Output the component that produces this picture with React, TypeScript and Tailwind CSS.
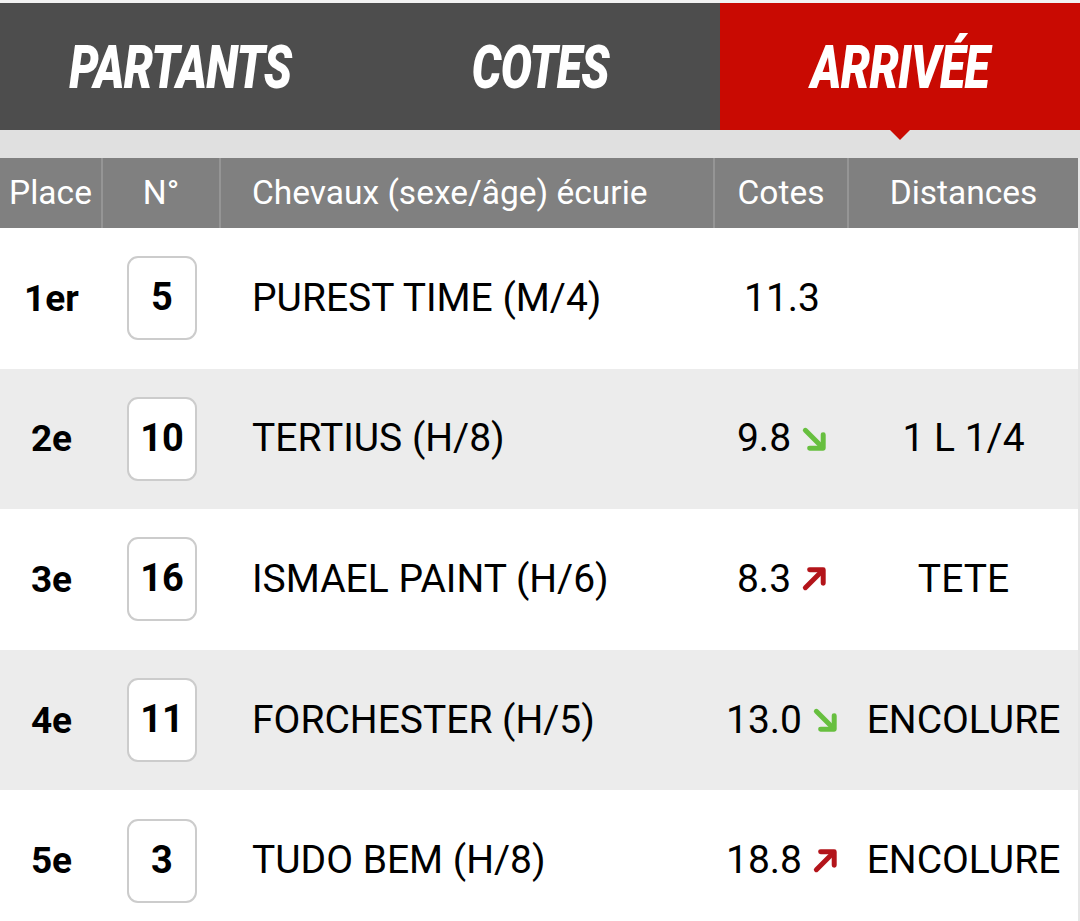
const rows = [
  { place: "1er", num: "5", name: "PUREST TIME (M/4)", cote: "11.3", trend: null, dist: "" },
  { place: "2e", num: "10", name: "TERTIUS (H/8)", cote: "9.8", trend: "down", dist: "1 L 1/4" },
  { place: "3e", num: "16", name: "ISMAEL PAINT (H/6)", cote: "8.3", trend: "up", dist: "TETE" },
  { place: "4e", num: "11", name: "FORCHESTER (H/5)", cote: "13.0", trend: "down", dist: "ENCOLURE" },
  { place: "5e", num: "3", name: "TUDO BEM (H/8)", cote: "18.8", trend: "up", dist: "ENCOLURE" },
];

function Trend({ dir }: { dir: string }) {
  if (dir === "down") {
    return (
      <svg className="w-[26px] h-[26px] text-[#67bf3f]" viewBox="0 0 24 24" fill="none" stroke="currentColor" strokeWidth="4.6" strokeLinecap="round" strokeLinejoin="round">
        <path d="M4 4 L19 19" />
        <path d="M20.5 8 V20.5 H8" />
      </svg>
    );
  }
  return (
    <svg className="w-[26px] h-[26px] text-[#b3141a]" viewBox="0 0 24 24" fill="none" stroke="currentColor" strokeWidth="4.6" strokeLinecap="round" strokeLinejoin="round">
      <path d="M4 20 L19 5" />
      <path d="M8 3.5 H20.5 V16" />
    </svg>
  );
}

const tabs = [
  { label: "PARTANTS", active: false },
  { label: "COTES", active: false },
  { label: "ARRIVÉE", active: true },
];

export default function App() {
  return (
    <div className="w-[1080px] h-[921px] overflow-hidden bg-white font-['Roboto',sans-serif]">
      {/* Tabs */}
      <div className="pt-[3px] bg-[#f2f2f2]">
        <div className="grid grid-cols-3 h-[127px] bg-[#4d4d4d]">
          {tabs.map((t) => (
            <div
              key={t.label}
              className={`relative flex items-center justify-center ${t.active ? "bg-[#c90a02]" : ""}`}
            >
              <span className="inline-block text-white text-[60px] font-black italic leading-none tracking-[-1px] scale-x-[0.775] pt-[2px]">
                {t.label}
              </span>
              {t.active && (
                <div className="absolute left-1/2 -translate-x-1/2 top-full w-0 h-0 border-l-[10px] border-r-[10px] border-t-[10px] border-l-transparent border-r-transparent border-t-[#c90a02] z-10" />
              )}
            </div>
          ))}
        </div>
      </div>
      <div className="h-[28px] bg-[#e0e0e0]" />

      {/* Table */}
      <div className="pr-[2px] bg-[#e6e6e6]">
        <div className="grid grid-cols-[103px_118px_494px_134px_1fr] h-[70px] bg-[#808080] text-white text-[33.5px] leading-none">
          <div className="flex items-center justify-center border-r-2 border-[#959595]">Place</div>
          <div className="flex items-center justify-center border-r-2 border-[#959595]">N°</div>
          <div className="flex items-center pl-[31px] border-r-2 border-[#959595]">Chevaux (sexe/âge) écurie</div>
          <div className="flex items-center justify-center border-r-2 border-[#959595]">Cotes</div>
          <div className="flex items-center justify-center">Distances</div>
        </div>

        {rows.map((r, i) => (
          <div
            key={r.place}
            className={`grid grid-cols-[103px_118px_494px_134px_1fr] h-[140.6px] items-center text-black text-[39px] leading-none ${i % 2 === 1 ? "bg-[#ececec]" : "bg-white"}`}
          >
            <div className="flex justify-center font-bold text-[37px]">{r.place}</div>
            <div className="flex justify-center">
              <div className="w-[70px] h-[84px] rounded-[11px] border-2 border-[#cccccc] bg-white flex items-center justify-center font-bold text-[38px] pb-[2px]">
                {r.num}
              </div>
            </div>
            <div className="pl-[31px]">{r.name}</div>
            <div className="flex items-center justify-center gap-[10px]">
              <span>{r.cote}</span>
              {r.trend && <Trend dir={r.trend} />}
            </div>
            <div className="flex justify-center">{r.dist}</div>
          </div>
        ))}
      </div>
    </div>
  );
}
